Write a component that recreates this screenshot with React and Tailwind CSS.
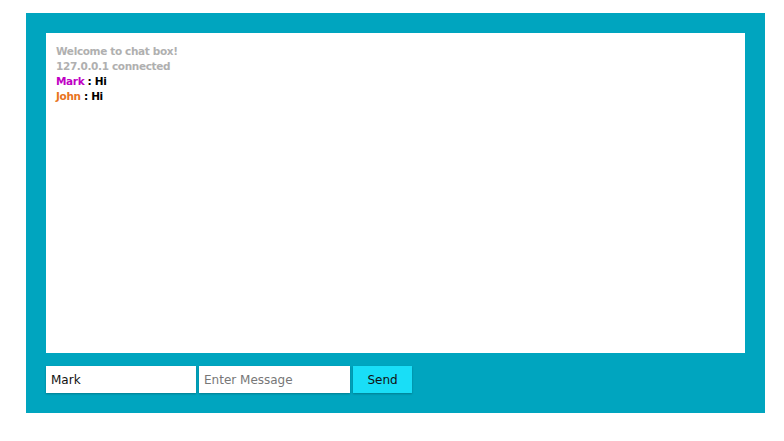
import React from "react";

const messages = [
  { system: true, text: "Welcome to chat box!" },
  { system: true, text: "127.0.0.1 connected" },
  { name: "Mark", color: "text-[#c000c4]", text: "Hi" },
  { name: "John", color: "text-[#e8741c]", text: "Hi" },
];

export default function App() {
  return (
    <div className="min-h-screen bg-white pt-[13px] pl-[26px] font-['DejaVu_Sans',sans-serif]">
      <div className="w-[739px] bg-[#00a5bf] p-5">
        <div className="h-[320px] bg-white px-[10px] pt-[11px] text-[10.5px] font-bold leading-[15px] tracking-[-0.35px]">
          {messages.map((m, i) =>
            m.system ? (
              <div key={i} className="text-[#b0b0b0]">
                {m.text}
              </div>
            ) : (
              <div key={i} className="text-black">
                <span className={m.color}>{m.name}</span> : {m.text}
              </div>
            )
          )}
        </div>
        <div className="mt-[13px] flex gap-[3px] text-[12px]">
          <input
            defaultValue="Mark"
            className="h-[27px] w-[150px] bg-white px-[5px] pt-[1px] text-[#111] shadow-[0_1px_2px_rgba(0,0,0,0.25)] outline-none"
          />
          <input
            placeholder="Enter Message"
            className="h-[27px] w-[151px] bg-white px-[5px] pt-[1px] text-[#111] placeholder:text-[#777] shadow-[0_1px_2px_rgba(0,0,0,0.25)] outline-none"
          />
          <button className="h-[27px] w-[59px] bg-[#19def7] pt-[1px] text-[#111] shadow-[0_1px_2px_rgba(0,0,0,0.25)]">
            Send
          </button>
        </div>
      </div>
    </div>
  );
}
